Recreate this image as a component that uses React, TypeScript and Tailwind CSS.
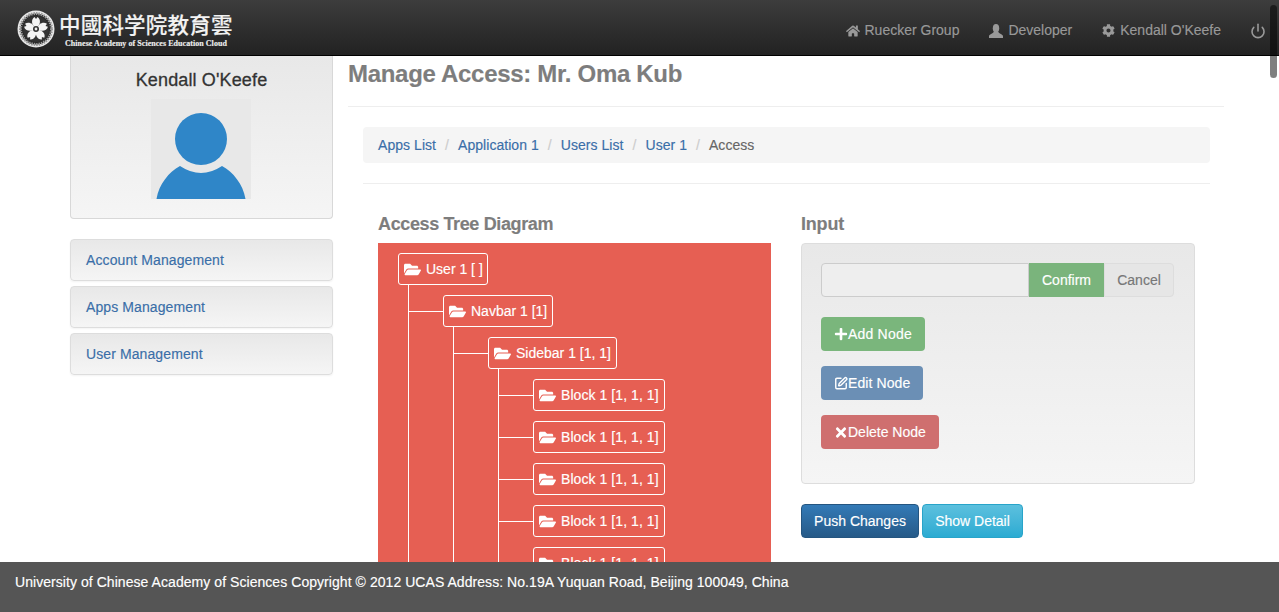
import React from "react";
import { FaHome, FaCog, FaFolderOpen, FaPlus, FaTimes } from "react-icons/fa";
import { Power, SquarePen } from "lucide-react";

function Emblem() {
  return (
    <svg width="38" height="38" viewBox="0 0 38 38" className="shrink-0">
      <circle cx="19" cy="19" r="18.5" fill="#e8e8e8" />
      <circle cx="19" cy="19" r="15.5" fill="#2a2a2a" stroke="#9a9a9a" strokeWidth="3" strokeDasharray="1.5 1" />
      <circle cx="19" cy="19" r="13" fill="#333" />
      {[0, 72, 144, 216, 288].map((a) => (
        <path key={a} transform={`rotate(${a} 19 19)`} d="M19 18 C14 15 14 9 17.5 7 L19 9 L20.5 7 C24 9 24 15 19 18 Z" fill="#f4f4f4" />
      ))}
      <circle cx="19" cy="19" r="3" fill="#333" />
      <circle cx="19" cy="19" r="1.4" fill="#eee" />
    </svg>
  );
}

function UserGlyph() {
  return (
    <svg width="14" height="14" viewBox="0 0 14 14" fill="currentColor" className="shrink-0">
      <ellipse cx="7" cy="4.3" rx="3.2" ry="4.3" />
      <path d="M0 14 V12.2 C0 10.4 4 9.8 5 7.5 H9 C10 9.8 14 10.4 14 12.2 V14 Z" />
    </svg>
  );
}

function Header() {
  return (
    <header className="flex h-[56px] shrink-0 items-center justify-between border-b border-black bg-gradient-to-b from-[#3d3d3d] to-[#222222] pl-[17px] pr-[13px]">
      <div className="flex items-center gap-[3px] pt-[2px]">
        <Emblem />
        <div className="flex flex-col items-start">
          <span className="h-[29px] pl-[1px] text-[21.5px] font-medium leading-[28px] tracking-[0.2px] text-[#f2f2f2] [font-family:'Noto_Sans_CJK_TC',sans-serif]">中國科学院教育雲</span>
          <span className="pl-[7px] text-[8px] font-bold leading-[9px] tracking-[0.05px] text-[#eeeeee] [font-family:'Liberation_Serif',serif]">Chinese Academy of Sciences Education Cloud</span>
        </div>
      </div>
      <nav className="flex items-center pt-[6px] text-[14px] text-[#999999]">
        <span className="flex items-center gap-[4px]"><FaHome size={14} />Ruecker Group</span>
        <span className="ml-[30px] flex items-center gap-[5px]"><UserGlyph />Developer</span>
        <span className="ml-[30px] flex items-center gap-[5px]"><FaCog size={13} />Kendall O'Keefe</span>
        <Power size={16} strokeWidth={2.4} className="ml-[29px]" />
      </nav>
    </header>
  );
}

function Sidebar() {
  return (
    <aside className="w-[263px] shrink-0">
      <div className="flex h-[163px] flex-col items-center rounded-b-[4px] border border-t-0 border-[#d8d8d8] bg-gradient-to-b from-[#e8e8e8] to-[#f5f5f5]">
        <h2 className="mt-[13px] text-[18px] font-medium leading-[22px] tracking-[0.14px] text-[#333333] [-webkit-text-stroke:0.3px]">Kendall O'Keefe</h2>
        <div className="mr-[1px] mt-[8px] h-[100px] w-[100px] bg-[#e8e8e8]">
          <svg width="100" height="100" viewBox="0 0 100 100">
            <circle cx="50" cy="40" r="26" fill="#2f86c8" />
            <path d="M5.5 100 C8 85 18 73 29 67 Q50 81 71 67 C82 73 92 85 94.5 100 Z" fill="#2f86c8" />
          </svg>
        </div>
      </div>
      <div className="mt-[20px] flex flex-col gap-[5px]">
        {["Account Management", "Apps Management", "User Management"].map((t) => (
          <a key={t} className="block h-[42px] rounded-[4px] border border-[#dddddd] bg-gradient-to-b from-[#e8e8e8] to-[#f5f5f5] px-[15px] text-[14px] leading-[40px] tracking-[0.1px] text-[#3a6ea8] shadow-[0_1px_2px_rgba(0,0,0,0.05)]">
            {t}
          </a>
        ))}
      </div>
    </aside>
  );
}

function Box({ label, className = "" }: { label: string; className?: string }) {
  return (
    <div className={`flex h-[32px] items-center gap-[5px] whitespace-nowrap rounded-[3px] border border-white px-[5px] text-[14px] text-white ${className}`}>
      <FaFolderOpen size={17} className="shrink-0" />
      {label}
    </div>
  );
}

function Child({ label, boxClass, children }: { label: string; boxClass?: string; children?: React.ReactNode }) {
  return (
    <div className="pt-[10px]">
      <div className="flex items-center">
        <span className="h-px w-[34px] bg-white" />
        <Box label={label} className={boxClass} />
      </div>
      {children && <div className="ml-[44px] border-l border-white">{children}</div>}
    </div>
  );
}

function Tree() {
  const blocks = [1, 2, 3, 4, 5];
  return (
    <div className="h-[400px] overflow-hidden bg-[#e65f53] pl-[20px] pt-[10px]">
      <div className="w-[90px]"><Box label="User 1 [ ]" /></div>
      <div className="ml-[10px] border-l border-white">
        <Child label="Navbar 1 [1]">
          <Child label="Sidebar 1 [1, 1]">
            {blocks.map((b) => (
              <Child key={b} label="Block 1 [1, 1, 1]" boxClass="tracking-[0.07px]" />
            ))}
          </Child>
        </Child>
      </div>
    </div>
  );
}

function ActionButton({ className, icon, children }: { className: string; icon: React.ReactNode; children: React.ReactNode }) {
  return (
    <button className={`flex h-[34px] items-center rounded-[4px] pl-[13px] text-[14px] text-white ${className}`}>
      <span className="flex w-[14px] justify-center">{icon}</span>
      {children}
    </button>
  );
}

function InputPanel() {
  return (
    <div className="h-[241px] rounded-[4px] border border-[#dddddd] bg-gradient-to-b from-[#e8e8e8] to-[#f5f5f5] p-[19px]">
      <div className="mr-[1px] flex h-[34px] text-[14px]">
        <div className="flex-1 rounded-l-[4px] border border-[#cccccc] bg-[#eeeeee]" />
        <span className="flex w-[75px] items-center justify-center bg-[#7ab47c] text-white">Confirm</span>
        <span className="flex w-[70px] items-center justify-center rounded-r-[4px] border border-[#dddddd] bg-[#e6e6e6] text-[#777777]">Cancel</span>
      </div>
      <div className="mt-[20px] flex flex-col items-start gap-[15px]">
        <ActionButton className="w-[104px] bg-[#7ab67c] tracking-[0.2px]" icon={<FaPlus size={14} />}>Add Node</ActionButton>
        <ActionButton className="w-[102px] bg-[#6b8fb5] tracking-[0.1px]" icon={<SquarePen size={15} strokeWidth={2.4} />}>Edit Node</ActionButton>
        <ActionButton className="w-[118px] bg-[#cf6f6f]" icon={<FaTimes size={15} />}>Delete Node</ActionButton>
      </div>
    </div>
  );
}

function Main() {
  const crumbs = ["Apps List", "Application 1", "Users List", "User 1"];
  return (
    <main className="ml-[15px] w-[876px] shrink-0">
      <h1 className="h-[50px] pt-[3px] text-[24px] font-bold leading-[30px] tracking-[-0.3px] text-[#7d7d7d]">Manage Access: Mr. Oma Kub</h1>
      <div className="border-t border-[#eeeeee] pl-[15px] pr-[14px] pt-[20px]">
        <div className="flex h-[36px] items-center rounded-[4px] bg-[#f5f5f5] px-[15px] text-[14px] tracking-[0.05px]">
          {crumbs.map((c) => (
            <React.Fragment key={c}>
              <a className="text-[#3a6ea8]">{c}</a>
              <span className="px-[9px] text-[#cccccc]">/</span>
            </React.Fragment>
          ))}
          <span className="text-[#666666]">Access</span>
        </div>
        <div className="mt-[20px] border-t border-[#eeeeee]" />
        <div className="mt-[29px] grid grid-cols-[393px_394px] gap-x-[30px] pl-[15px]">
          <div>
            <h3 className="mb-[8px] text-[18px] font-bold leading-[22px] tracking-[-0.37px] text-[#7d7d7d]">Access Tree Diagram</h3>
            <Tree />
          </div>
          <div>
            <h3 className="mb-[8px] text-[18px] font-bold leading-[22px] tracking-[-0.2px] text-[#7d7d7d]">Input</h3>
            <InputPanel />
            <div className="mt-[20px] flex gap-[3px] text-[14px] text-white">
              <button className="h-[34px] w-[118px] rounded-[4px] border border-[#245580] bg-gradient-to-b from-[#337ab7] to-[#265a88]">Push Changes</button>
              <button className="h-[34px] w-[101px] rounded-[4px] border border-[#28a4c9] bg-gradient-to-b from-[#5bc0de] to-[#2aabd2]">Show Detail</button>
            </div>
          </div>
        </div>
      </div>
    </main>
  );
}

export default function App() {
  return (
    <div className="relative flex h-[612px] flex-col overflow-hidden bg-white text-[#333333] [-webkit-text-stroke:0.15px] [font-family:'Liberation_Sans',Arial,sans-serif]">
      <Header />
      <div className="flex min-h-0 flex-1 overflow-hidden pl-[70px]">
        <Sidebar />
        <Main />
      </div>
      <footer className="h-[50px] shrink-0 bg-[#555555] pl-[15px] text-[14px] leading-[40px] tracking-[0.055px] text-white">
        University of Chinese Academy of Sciences Copyright © 2012 UCAS Address: No.19A Yuquan Road, Beijing 100049, China
      </footer>
      <div className="absolute right-[2px] top-[5px] h-[73px] w-[7px] rounded-full bg-[rgba(0,0,0,0.5)]" />
    </div>
  );
}
